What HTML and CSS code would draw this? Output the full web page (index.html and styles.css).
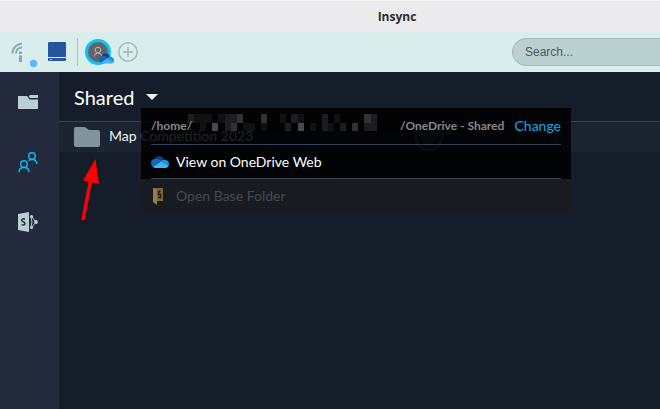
FILE: index.html
```
<!DOCTYPE html>
<html lang="en">
<head>
<meta charset="utf-8">
<meta name="viewport" content="width=device-width, initial-scale=1">
<title>Insync</title>
<link rel="stylesheet" href="styles.css">
</head>
<body>
<div class="app">
  <header class="titlebar"><span class="title">Insync</span></header>
  <div class="toolbar">
    <button class="tool status" aria-label="Sync status">
      <svg width="32" height="32" viewBox="0 0 32 32">
        <g fill="none" stroke="#87a9b5" stroke-width="2">
          <path d="M4.500 17.500V17A9.500 9.500 0 0 1 14 7.800M8 17.500V17A6 6 0 0 1 14 11.500"/>
        </g>
        <path d="M11 15.500h3v2.500h-3zM11 19.500h3v6.500h-3z" fill="#87a9b5"/>
        <circle cx="25.500" cy="27.500" r="3.700" fill="#64b8f5"/>
      </svg>
    </button>
    <button class="tool drive" aria-label="Local drive">
      <svg width="18" height="20" viewBox="0 0 18 20">
        <path d="M1 0h16q1 0 1 1v14H0V1q0-1 1-1zM0 16h18v2q0 1-1 1H1q-1 0-1-1z" fill="#27549c"/>
        <path d="M2 17.500h1.500" stroke="#d9eeec" stroke-width="1"/>
      </svg>
    </button>
    <span class="divider"></span>
    <button class="tool account" aria-label="OneDrive account">
      <svg width="30" height="28" viewBox="0 0 30 28">
        <circle cx="13" cy="14" r="11.500" fill="#646464" stroke="#0bc0fb" stroke-width="3"/>
        <g fill="none" stroke="#bbb" stroke-width="1"><circle cx="13" cy="12" r="2.800"/><path d="M9.500 18.500v-1q0-2.500 3.500-2.500t3.500 2.500v1"/></g>
        <use href="#cloud" x="14" y="15" width="15" height="11"/>
      </svg>
    </button>
    <button class="tool add" aria-label="Add account">
      <svg width="20" height="20" viewBox="0 0 20 20"><g fill="none" stroke="#a0b9b8" stroke-width="1.500"><circle cx="10" cy="10" r="9.200"/><path d="M10 5v10M5 10h10"/></g></svg>
    </button>
    <input class="search" type="search" aria-label="Search" placeholder="Search...">
  </div>
  <div class="body">
    <nav class="sidebar">
      <a href="#files" class="nav" aria-label="Files">
        <svg width="20" height="20" viewBox="0 0 20 20"><path d="M0 4h9l2.500 3.500H20V17H0z" fill="#b9cfd4"/><path d="M10.500 4.500L12 3h8v3h-8z" fill="#b9cfd4"/></svg>
      </a>
      <a href="#shared" class="nav" aria-label="Shared">
        <svg width="20" height="20" viewBox="0 0 20 20"><g fill="none" stroke="#0bb8ef" stroke-width="1.500"><circle cx="14" cy="4" r="3.300"/><path d="M10.500 8.500q1.500-1 3.500-1 4.500 0 5 4.500"/><circle cx="6" cy="12" r="3.300"/><path d="M1 20q0-4.500 5-4.500t5 4.500"/></g></svg>
      </a>
      <a href="#sharepoint" class="nav" aria-label="SharePoint">
        <svg width="20" height="20" viewBox="0 0 20 20"><path d="M13.500 4.500L18 10l-4.500 5.500M13 5.500q2 4.500 0 9" fill="none" stroke="#b9cfd4" stroke-width="1"/><g fill="#b9cfd4"><path d="M0 2l11-2v20L0 18z"/><circle cx="13.500" cy="4.500" r="1.600"/><circle cx="18" cy="10" r="1.900"/><circle cx="13.500" cy="15.500" r="1.600"/></g><path d="M7 7.300Q3.800 6 3.800 8.200c0 2 3.200 1.300 3.200 3.400q0 2-3.500 1" fill="none" stroke="#222a3c" stroke-width="1.500"/></svg>
      </a>
    </nav>
    <main class="content">
      <div class="heading">
        <h1>Shared</h1>
        <button class="caret" aria-label="Folder menu"><svg width="12" height="6" viewBox="0 0 12 6"><path d="M0 0h12L6 6z" fill="#e4f1f1"/></svg></button>
      </div>
      <div class="row">
        <svg width="26" height="20" viewBox="0 0 26 20"><path d="M2 0h9l4 3h9q2 0 2 2v13q0 2-2 2H2q-2 0-2-2V2q0-2 2-2z" fill="#7f949d"/></svg>
        <span class="name">Map Competition 2023</span>
        <svg class="ring" width="32" height="32" viewBox="0 0 32 32"><circle cx="16" cy="16" r="13" fill="#1d2737" stroke="#4a5563" stroke-width="3"/><circle cx="16" cy="16" r="8" fill="#35404e"/></svg>
      </div>
      <svg class="arrow" width="22" height="64" viewBox="0 0 22 64"><path d="M2 61L9.500 22" stroke="#f00" stroke-width="3.500"/><path d="M14.500 0L18 25 2 21.500z" fill="#f00"/></svg>
      <div class="menu">
        <div class="path">
          <span class="root">/home/</span>
          <svg class="redacted" width="212" height="17" viewBox="0 0 212 17" aria-hidden="true">
            <path d="M0 0h212v17H0z" fill="#020202"/>
            <path d="M6 0h6v9H6zM30 0h7v9h-7zM92 0h6v9h-6zM146 0h6v9h-6zM55 9h12v8H55zM12 9h6v8h-6zM12 0h12v9H12zM110 0h6v9h-6zM73 9h6v8h-6zM122 9h6v8h-6zM140 9h6v8h-6z" fill="#101112"/>
            <path d="M0 0h6v9H0zM37 0h6v9h-6zM43 0h6v9h-6zM103 0h7v9h-7zM134 0h6v9h-6zM183 0h6v9h-6zM37 9h6v8h-6zM97 9h6v8h-6zM134 9h6v8h-6zM152 9h6v8h-6zM176 9h13v8h-13z" fill="#1c1d1e"/>
            <path d="M49 0h6v9h-6zM73 0h6v9h-6zM176 0h7v9h-7zM43 9h6v8h-6zM164 9h6v8h-6z" fill="#313233"/>
            <path d="M24 9h6v8h-6zM110 9h6v8h-6z" fill="#484949"/>
          </svg>
          <span class="tail">/OneDrive - Shared</span>
          <button class="change">Change</button>
        </div>
        <button class="item">
          <svg width="18" height="18" viewBox="0 0 18 18"><use href="#cloud" y="3" width="18" height="12"/></svg><span>View on OneDrive Web</span>
        </button>
        <hr>
        <button class="item dim" disabled>
          <svg width="18" height="18" viewBox="0 0 18 18"><path d="M2 1h10v13H6z" fill="#7c6435"/><path d="M2 1l4 2v15l-4-3z" fill="#8f8151"/><path d="M9.500 4.500H7.500v3h2v3h-2" fill="none" stroke="#211b11" stroke-width="1.500"/></svg><span>Open Base Folder</span>
        </button>
      </div>
    </main>
  </div>
</div>
<svg class="defs" aria-hidden="true"><symbol id="cloud" viewBox="0 0 18 12">
  <path d="M3 6Q3 0 8 0q4 0 5 4l-4 4z" fill="#123c86"/>
  <path d="M4 3q4-1 7 3l-7 6Q0 11 0 7q0-4 4-4z" fill="#1767bd"/>
  <path d="M9 6q2-3 6-2 3 1 3 4 0 4-4 4z" fill="#1e93df"/>
  <path d="M2 11l8-5 7 4q-1 2-3 2H4z" fill="#46b7ed"/>
</symbol></svg>
</body>
</html>
```
FILE: styles.css
```
* { box-sizing: border-box; }
body { margin: 0; font-family: Lato, "Liberation Sans", sans-serif; background: #151c2a; overflow: hidden; }
button { border: 0; padding: 0; background: none; font: inherit; color: inherit; }
svg { display: block; flex: none; }
.defs { position: absolute; width: 0; height: 0; }
.app { display: flex; flex-direction: column; min-height: 100vh; }
.titlebar { height: 32px; display: flex; align-items: center; justify-content: center; padding-left: 134px; background: #ebebed; border-top: 1px solid #f5f5f6; color: #2c2c2c; font: bold 12px "Open Sans", sans-serif; }
.toolbar { height: 40px; display: flex; align-items: center; background: #d9eeec; overflow: hidden; }
.status { margin-left: 8px; }
.drive { margin-left: 8px; }
.divider { width: 1px; height: 28px; margin-left: 11px; background: #a7bfbe; }
.account { margin-left: 7px; }
.add { margin-left: 3px; }
.search { flex: 1; min-width: 0; height: 28px; margin: 0 -20px 0 374px; padding: 0 12px; border: 1px solid #a1b7b6; border-radius: 14px; background: #bbd1d1; font: 12px "Liberation Sans", sans-serif; outline: 0; }
.search::placeholder { color: #4b565e; opacity: 1; }
.body { flex: 1; display: flex; }
.sidebar { width: 59px; flex: none; display: flex; flex-direction: column; align-items: center; gap: 40px; padding: 20px 3px 0 0; background: #222a3c; }
.content { flex: 1; min-width: 0; position: relative; }
.heading { height: 50px; display: flex; align-items: center; gap: 12px; padding: 0 15px; border-bottom: 1px solid #364354; color: #fff; }
h1 { margin: 0; font-size: 20px; line-height: 24px; font-weight: 400; }
.row { height: 30px; display: flex; align-items: center; padding-left: 15px; background: #1c2432; color: #f0f2f4; font-size: 14px; line-height: 20px; }
.name { margin-left: 9px; padding-bottom: 2px; }
.ring { margin-left: 160px; }
.arrow { position: absolute; left: 22px; top: 87px; }
.menu { position: absolute; left: 82px; top: 36px; width: 430px; background: rgba(0, 0, 0, .87); color: #fff; font-size: 14px; }
.path { height: 37px; display: flex; align-items: center; margin: 0 10px; padding-bottom: 2px; border-bottom: 1px solid #34435a; color: #878787; font-size: 12px; font-weight: bold; }
.root { width: 37px; z-index: 1; }
.redacted { margin-bottom: 6px; }
.tail { white-space: nowrap; }
.change { margin-left: auto; color: #0cabe3; font-size: 14px; font-weight: 400; }
.item { width: 100%; height: 33px; display: flex; align-items: center; gap: 7px; padding-left: 10px; }
hr { height: 1px; margin: 0 10px; border: 0; background: #34435a; }
.dim { color: #464a4e; background: #181b20; }
```
